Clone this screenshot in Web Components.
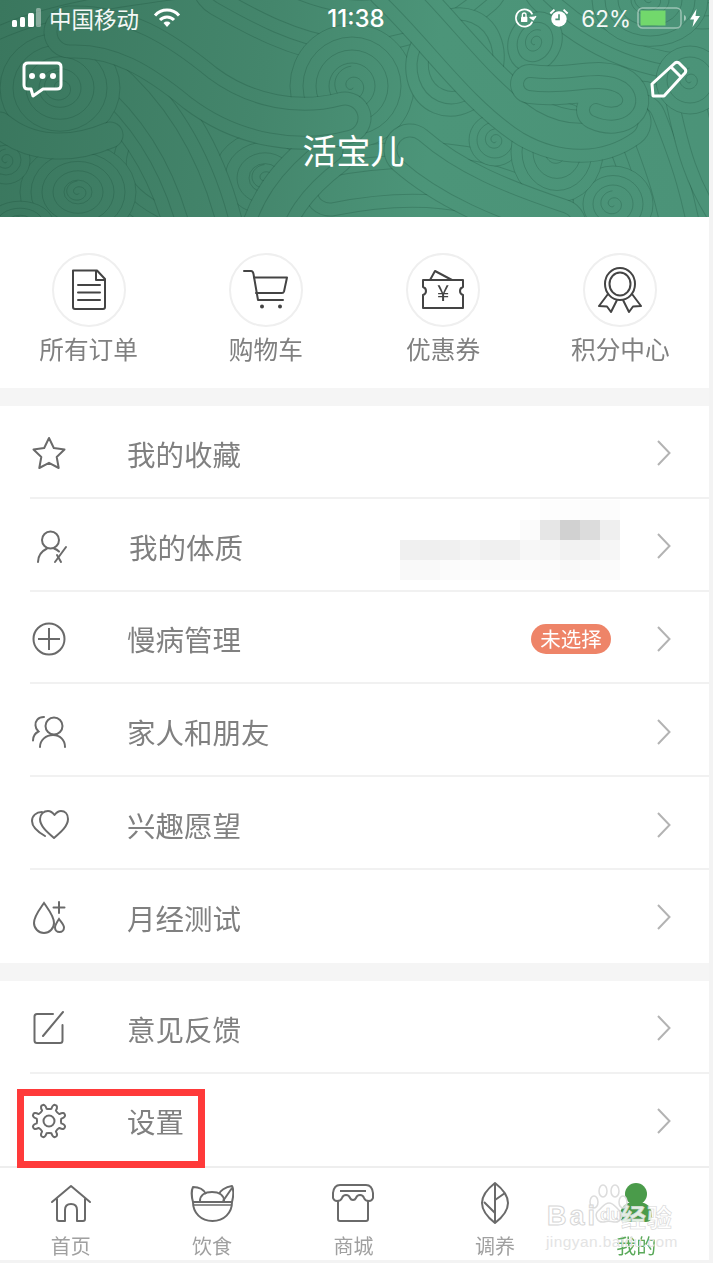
<!DOCTYPE html>
<html lang="zh">
<head>
<meta charset="utf-8">
<title>我的</title>
<style>
  html, body { margin: 0; padding: 0; background: #f3f3f3; }
  body { width: 713px; height: 1263px; overflow: hidden; font-family: "Noto Sans CJK SC", "Noto Sans", sans-serif; }
</style>
</head>
<body>
<app-page>
  <hero-header name="活宝儿"></hero-header>

  <quick-grid>
    <quick-action label="所有订单">
      <svg width="44" height="44" viewBox="0 0 44 44" fill="none" stroke="#444" stroke-width="2" stroke-linejoin="round" stroke-linecap="round">
        <path d="M6 2.500h24l8 8.500v28q0 2-2 2H8q-2 0-2-2z"/><path d="M29 3v9h9"/><path d="M11 17h22M11 24.500h22M11 32h22"/>
      </svg>
    </quick-action>
    <quick-action label="购物车">
      <svg width="50" height="44" viewBox="0 0 50 44" fill="none" stroke="#444" stroke-width="2" stroke-linejoin="round" stroke-linecap="round">
        <path d="M3 3h7q2 0 2.500 3L17 32h25"/><path d="M13 9.500h33l-3 14q-.5 1.500-2 1.500H15"/>
        <circle cx="21" cy="38.500" r="2" fill="#444" stroke="none"/><circle cx="39" cy="38.500" r="2" fill="#444" stroke="none"/>
      </svg>
    </quick-action>
    <quick-action label="优惠券">
      <svg width="46" height="44" viewBox="0 0 46 44" fill="none" stroke="#444" stroke-width="2" stroke-linejoin="round" stroke-linecap="round">
        <path d="M3 12h40v7q-3 1-3 4t3 4v13H3V27q3-1 3-4t-3-4z"/><path d="M10 12l5-9 17 9"/>
        <text x="23" y="33" text-anchor="middle" font-family="Noto Sans CJK SC" font-size="22" fill="#444" stroke="none">¥</text>
      </svg>
    </quick-action>
    <quick-action label="积分中心">
      <svg width="46" height="46" viewBox="0 0 46 46" fill="none" stroke="#444" stroke-width="2" stroke-linejoin="round">
        <ellipse cx="23" cy="17" rx="15" ry="16"/><ellipse cx="23" cy="17" rx="10.500" ry="11.500"/>
        <path d="M11 27L2 39l8 .5L14 45l6-12"/><path d="M35 27l9 12-8 .5L32 45l-6-12"/>
      </svg>
    </quick-action>
  </quick-grid>

  <menu-group>
    <menu-row>
      <svg slot="icon" width="40" height="40" viewBox="0 0 40 40" fill="none" stroke="#6a6a6a" stroke-width="2" stroke-linejoin="round"><path d="M20 5l4.800 10 10.700 1.500-7.800 7.500 2 11L20 29.800 10.300 35l2-11-7.800-7.500L15.200 15z"/></svg>
      我的收藏
    </menu-row>
    <menu-row style="--label-shift:2px">
      <svg slot="icon" width="40" height="40" viewBox="0 0 40 40" fill="none" stroke="#6a6a6a" stroke-width="2" stroke-linecap="round"><ellipse cx="21.500" cy="14" rx="8.500" ry="8.500"/><path d="M9 36c0-6 4-11 9-13.500"/><path d="M25 22.500q3 1 5 3"/><path d="M37 21L26 36"/><path d="M28 29l4 7"/></svg>
      我的体质
    </menu-row>
    <menu-row>
      <svg slot="icon" width="40" height="40" viewBox="0 0 40 40" fill="none" stroke="#6a6a6a" stroke-width="2"><circle cx="20" cy="20" r="15.500"/><path d="M20 9v22M9 20h22"/></svg>
      慢病管理
      <status-pill slot="meta">未选择</status-pill>
    </menu-row>
    <menu-row>
      <svg slot="icon" width="40" height="40" viewBox="0 0 40 40" fill="none" stroke="#6a6a6a" stroke-width="2" stroke-linecap="round"><circle cx="25" cy="14" r="8.500"/><path d="M11 35c0-7 6-12 13-12s12 5 12 12"/><path d="M15 5c-6 0-9 4-8.500 8.500 0 2.500 1.500 4.500 3 6-3 1.500-5.500 5-5.500 9"/></svg>
      家人和朋友
    </menu-row>
    <menu-row>
      <svg slot="icon" width="40" height="40" viewBox="0 0 40 40" fill="none" stroke="#6a6a6a" stroke-width="2" stroke-linecap="round" stroke-linejoin="round"><path d="M25 33C18 27 11 21 11 14C11 9 15 6 19 6C22 6 24 8 25.500 10C27 8 29 6 32 6C36 6 39 9 39 14C39 21 32 27 25 33z"/><path d="M13 7C7 7 3 11 3 16C3 22 9 27 16 31"/></svg>
      兴趣愿望
    </menu-row>
    <menu-row last>
      <svg slot="icon" width="40" height="40" viewBox="0 0 40 40" fill="none" stroke="#6a6a6a" stroke-width="2" stroke-linecap="round"><path d="M15 6c-4 6-10 13-10 20a10 10 0 0 0 20 0C25 19 19 12 15 6z"/><path d="M30 22c-2 3-4 6-4 8.500a4.500 4.500 0 0 0 9 0C35 28 32 25 30 22z"/><path d="M30 5v11M24.500 10.500h11"/></svg>
      月经测试
    </menu-row>
  </menu-group>

  <menu-group>
    <menu-row>
      <svg slot="icon" width="40" height="40" viewBox="0 0 40 40" fill="none" stroke="#6a6a6a" stroke-width="2" stroke-linecap="round"><path d="M24 6H8q-2.500 0-2.500 2.500v24q0 2.500 2.500 2.500h23q2.500 0 2.500-2.500V17"/><path d="M34 4L14 28"/></svg>
      意见反馈
    </menu-row>
    <menu-row last>
      <gear-icon slot="icon"></gear-icon>
      设置
    </menu-row>
  </menu-group>

  <tab-bar>
    <tab-item label="首页">
      <svg width="44" height="44" viewBox="0 0 44 44" fill="none" stroke="#6a6a6a" stroke-width="2" stroke-linecap="round" stroke-linejoin="round"><path d="M3 21L22 5l19 16"/><path d="M8 18v20q0 2 2 2h6V29q0-6 6-6t6 6v11h6q2 0 2-2V18"/></svg>
    </tab-item>
    <tab-item label="饮食">
      <svg width="44" height="44" viewBox="0 0 44 44" fill="none" stroke="#6a6a6a" stroke-width="2" stroke-linejoin="round"><path d="M3 21h39c0 11-8 19-19.500 19S3 32 3 21z"/><path d="M3 24h39" stroke-width="1.500"/><path d="M3 21C1 14 2 8 3 6C9 6 14 9 16 13"/><path d="M42 21C44 13 43 7 42 5C35 6 30 10 29 13"/><path d="M42 7L33 20"/><path d="M10 20C10 14 15 11 22 11S34 14 34 20"/></svg>
    </tab-item>
    <tab-item label="商城">
      <svg width="44" height="44" viewBox="0 0 44 44" fill="none" stroke="#6a6a6a" stroke-width="2" stroke-linejoin="round"><path d="M9 4h26q6 0 7 8v5q-1 3-4 3-4 0-5-3-1-3-4-3t-4 3q-1 2-3 2t-3-2q-1-3-4-3t-4 3q-1 3-5 3-3 0-4-3v-5q1-8 7-8z"/><path d="M7 20v18q0 2 2 2h26q2 0 2-2V20"/><path d="M9 10h26"/></svg>
    </tab-item>
    <tab-item label="调养">
      <svg width="44" height="44" viewBox="0 0 44 44" fill="none" stroke="#6a6a6a" stroke-width="2" stroke-linejoin="round"><path d="M22 2C13 9 9 15 9 22s4 13 13 20c9-7 13-13 13-20S31 9 22 2z"/><path d="M22 2v40"/><path d="M22 19l10-7M22 32l-11-11"/></svg>
    </tab-item>
    <tab-item label="我的" active>
      <svg width="44" height="44" viewBox="0 0 44 44" fill="#4a9b4a"><circle cx="22" cy="13" r="11"/><path d="M14 22h16c6 2 8 8 8 13 0 3-2 6-6 6H12c-4 0-6-3-6-6 0-5 2-11 8-13z"/></svg>
    </tab-item>
  </tab-bar>

  <blur-smudge></blur-smudge>
  <baidu-mark></baidu-mark>
  <focus-box></focus-box>
</app-page>

<script>
// petit helper : chaque composant déclare son style + son markup
function define(tag, html, extra) {
  const tpl = document.createElement("template");
  tpl.innerHTML = html;
  class El extends HTMLElement {
    connectedCallback() {
      if (this.shadowRoot) return;
      const root = this.attachShadow({ mode: "open" });
      root.appendChild(tpl.content.cloneNode(true));
      if (extra) extra(root, this);
    }
  }
  customElements.define(tag, El);
}

define("app-page", `
<style>
  :host { display: block; position: relative; width: 709px; height: 1260px; background: #fff; }
</style>
<slot></slot>`);

// volutes : bandes emboîtées (traits superposés, le plus large en dessous)
// chaque couche recouvre la précédente, d'où l'effet de rubans qui passent les uns sur les autres
function paintSwirls(svg) {
  const NS = "http://www.w3.org/2000/svg";
  const BG = "url(#heroBg)";
  const LINE = { stroke: "#174a36", "stroke-opacity": ".26" };
  const add = (name, attrs) => {
    const n = document.createElementNS(NS, name);
    Object.keys(attrs).forEach(k => n.setAttribute(k, attrs[k]));
    svg.appendChild(n);
  };
  const tube = (d, w, step = 13) => {
    for (let k = w; k > 0; k -= step * 2) {
      add("path", { d, fill: "none", ...LINE, "stroke-width": k + 1, "stroke-linecap": "round", "stroke-linejoin": "round" });
      add("path", { d, fill: "none", stroke: BG, "stroke-width": k - 1, "stroke-linecap": "round", "stroke-linejoin": "round" });
    }
  };
  const spiralD = (cx, cy, r1, turns, a0, k = 1, rot = 0) => {
    let d = "";
    const end = turns * Math.PI * 2, c = Math.cos(rot), s = Math.sin(rot);
    for (let t = 0; t <= end; t += .12) {
      const r = 2 + (r1 - 2) * t / end;
      const x = r * Math.cos(a0 + t), y = r * k * Math.sin(a0 + t);
      d += (d ? "L" : "M") + (cx + x * c - y * s).toFixed(1) + " " + (cy + x * s + y * c).toFixed(1);
    }
    return d;
  };
  // disque : anneaux concentriques et petite spirale au centre
  const disc = (cx, cy, r, step, k = 1, rot = 0, inner = 14) => {
    for (let q = r; q > inner; q -= step) {
      add("ellipse", { cx, cy, rx: q, ry: q * k, transform: `rotate(${rot * 57.3} ${cx} ${cy})`, fill: BG, ...LINE, "stroke-width": 1 });
    }
    add("path", { d: spiralD(cx, cy, inner, 1.600, 1, k, rot), fill: "none", ...LINE, "stroke-width": 1 });
  };

  // fond : rubans du dessous
  tube("M-20 20C40 -10 120 -20 200 -30", 52);
  tube("M230 -20C300 20 380 60 470 -20", 78);
  tube("M100 120C60 190 120 240 200 260", 78);
  tube("M330 190C430 170 520 180 610 260", 78);
  tube("M640 120C660 170 670 200 680 260", 78);
  tube("M560 -20C600 20 660 50 730 40", 78);
  tube("M690 90C700 140 710 180 740 220", 52);

  // petites volutes
  disc(78, 192, 58, 11, .85, 0, 13);
  disc(6, 160, 24, 9, 1, 0, 11);
  disc(20, 225, 34, 10, .7, 0, 12);
  disc(265, 178, 52, 12, .9, 0, 15);
  disc(495, 140, 26, 8, 1, 0, 11);
  disc(535, 42, 26, 9, 1.200, .5, 11);
  disc(613, 204, 40, 10, .95, 0, 14);
  disc(650, 0, 58, 13, .8, 0, 18);

  // grande descente à gauche
  tube("M108 70C150 105 190 160 208 245", 78);
  tube("M330 150C290 180 270 210 262 250", 52);

  // disques principaux
  disc(352, 86, 62, 13, 1, 0, 20);
  disc(455, 62, 48, 11, 1.150, .4, 15);
  disc(557, 152, 46, 11, 1.100, 0, 14);
  disc(60, 88, 60, 13, .92, 0, 18);

  // rubans qui traversent
  tube("M70 32C120 30 160 55 200 88C245 122 300 130 345 118", 52);
  tube("M392 -15C440 30 480 90 530 122C565 142 600 140 625 122", 52);
  tube("M410 150C450 185 500 205 560 225", 52);
  tube("M530 84C570 90 600 74 622 88C640 102 622 122 596 110", 39);
  tube("M0 125C30 150 70 152 110 135", 26);
  disc(690, 80, 34, 11, 1, 0, 12);
}

define("hero-header", `
<style>
  :host { display: block; position: relative; height: 217px; overflow: hidden; color: #fff; background: #44866c; }
  svg.bg { position: absolute; inset: 0; filter: blur(.4px); }
  .content { position: relative; display: flex; flex-direction: column; height: 100%; }
  .name { margin-top: 28px; text-align: center; font-size: 34px; line-height: 44px; padding-right: 2px; }
  .actions { display: flex; justify-content: space-between; align-items: flex-start; margin-top: 24px; padding: 0 21px; height: 40px; }
</style>
<svg class="bg" width="709" height="217">
  <defs>
    <linearGradient id="heroBg" gradientUnits="userSpaceOnUse" x1="0" y1="0" x2="709" y2="80">
      <stop offset="0" stop-color="#3a775e"/><stop offset=".38" stop-color="#44866c"/><stop offset=".62" stop-color="#4c9579"/><stop offset="1" stop-color="#4b9378"/>
    </linearGradient>
  </defs>
  <rect width="709" height="217" fill="url(#heroBg)"/>
</svg>
<div class="content">
  <status-bar></status-bar>
  <div class="actions">
    <svg width="42" height="38" viewBox="0 0 42 38" fill="none" stroke="#fff" stroke-width="3" stroke-linejoin="round">
      <path d="M7 3h29q4 0 4 4v18q0 4-4 4H22l-10 7-2-7H7q-4 0-4-4V7q0-4 4-4z"/>
      <g fill="#fff" stroke="none"><circle cx="11" cy="16" r="3"/><circle cx="21.500" cy="16" r="3"/><circle cx="32" cy="16" r="3"/></g>
    </svg>
    <svg width="38" height="38" viewBox="0 0 38 38" fill="none" stroke="#fff" stroke-width="3" stroke-linejoin="round">
      <path d="M2 24L25 3q2-1.500 4 0l6 6q1.500 2 0 4L14 36H3z"/><path d="M21 7l10 10"/>
    </svg>
  </div>
  <div class="name"></div>
</div>`, (root, el) => {
  root.querySelector(".name").textContent = el.getAttribute("name");
  paintSwirls(root.querySelector("svg.bg"));
});

define("status-bar", `
<style>
  :host { display: block; height: 36px; font-family: "Noto Sans CJK SC", sans-serif; color: #f4f8f6; }
  .bar { display: grid; grid-template-columns: 1fr auto 1fr; align-items: center; height: 36px; }
  .left, .right { display: flex; align-items: center; }
  .left { padding-left: 11px; gap: 6px; font-size: 22.500px; }
  .time { font-family: Inter, "Noto Sans", sans-serif; font-size: 24px; font-weight: 500; color: #fff; margin-left: 3px; }
  .right { justify-content: flex-end; padding-right: 8px; }
  .pct { font-family: Inter, "Noto Sans", sans-serif; font-size: 22.500px; margin: 0 6px 0 12px; }
  .carrier { line-height: 36px; }
  svg { display: block; }
</style>
<div class="bar">
  <div class="left">
    <svg width="32" height="20" viewBox="0 0 32 20" fill="#fff">
      <rect x="1" y="12" width="5" height="7" rx="1.500"/><rect x="9" y="9" width="5" height="10" rx="1.500"/><rect x="17" y="5" width="6" height="14" rx="1.500"/><rect x="25" y="0" width="5" height="19" rx="1.500" fill-opacity=".4"/>
    </svg>
    <span class="carrier">中国移动</span>
    <svg width="28" height="20" viewBox="0 0 28 20" style="margin-left:8px">
      <g fill="none" stroke="#fff" stroke-width="3"><path d="M2 7.500a16 16 0 0 1 24 0"/><path d="M7 12a9.500 9.500 0 0 1 14 0"/></g>
      <path d="M10.500 15a5 5 0 0 1 7 0L14 19z" fill="#fff"/>
    </svg>
  </div>
  <div class="time">11:38</div>
  <div class="right">
    <svg width="22" height="20" viewBox="0 0 24 22" fill="none" stroke="#fff" stroke-width="1.800">
      <path d="M19 15a9.500 9.500 0 1 1 0-8"/><path d="M16 10l4 3 3-4" stroke-width="1.500" fill="#fff"/>
      <rect x="6.500" y="9.500" width="7" height="6" rx="1" fill="#fff" stroke="none"/><path d="M8 10V7.500a2 2 0 0 1 4 0V10" stroke-width="1.500"/>
    </svg>
    <svg width="20" height="20" viewBox="0 0 22 22" style="margin-left:12px">
      <circle cx="11" cy="12" r="8.500" fill="#fff"/><path d="M11 7v5.500H7" fill="none" stroke="#4a9175" stroke-width="1.800"/>
      <path d="M1.500 6L6 1.800M20.500 6L16 1.800" stroke="#fff" stroke-width="2.200"/>
    </svg>
    <span class="pct">62%</span>
    <svg width="50" height="22" viewBox="0 0 50 22">
      <rect x="1" y="1" width="43" height="20" rx="4.500" fill="none" stroke="#fff" stroke-opacity=".45" stroke-width="1.500"/>
      <rect x="3.500" y="3.500" width="25" height="15" fill="#72d86c"/>
      <path d="M47 8q2 .5 2 3t-2 3z" fill="#fff" fill-opacity=".5"/>
    </svg>
    <svg width="12" height="20" viewBox="0 0 12 20" fill="#fff" style="margin-left:2px"><path d="M7.500 1L1 11.500h4L3.500 19 11 8H6.500z"/></svg>
  </div>
</div>`);

define("quick-grid", `
<style>
  :host { display: grid; grid-template-columns: repeat(4, 1fr); height: 171px; padding-top: 36px; box-sizing: border-box; filter: blur(.35px); }
</style>
<slot></slot>`);

define("quick-action", `
<style>
  :host { display: flex; flex-direction: column; align-items: center; }
  .ring { box-sizing: border-box; width: 74px; height: 74px; border: 2px solid #efefef; border-radius: 50%; display: flex; align-items: center; justify-content: center; }
  .label { margin-top: 3px; font-size: 24.700px; line-height: 36px; color: #808080; white-space: nowrap; }
  ::slotted(svg) { display: block; }
</style>
<div class="ring"><slot></slot></div>
<div class="label"></div>`, (root, el) => {
  root.querySelector(".label").textContent = el.getAttribute("label");
});

define("menu-group", `
<style>
  :host { display: block; border-top: 18px solid #f5f5f5; }
</style>
<slot></slot>`);

define("menu-row", `
<style>
  :host { display: block; height: 92.800px; padding-left: 30px; box-sizing: border-box; filter: blur(.35px); }
  .inner { display: flex; align-items: center; height: 100%; box-sizing: border-box; padding-top: 4px; border-bottom: 2px solid #f1f1f1; }
  :host([last]) .inner { border-bottom-color: transparent; }
  .icon { width: 98px; margin-left: -1px; flex: none; display: flex; }
  .text { flex: 1; font-size: 28.500px; color: #808080; white-space: nowrap; margin-left: var(--label-shift, 0); }
  .chev { margin: 0 38px 0 46px; flex: none; display: block; }
  ::slotted(svg) { display: block; }
</style>
<div class="inner">
  <div class="icon"><slot name="icon"></slot></div>
  <div class="text"><slot></slot></div>
  <slot name="meta"></slot>
  <svg class="chev" width="14" height="26" viewBox="0 0 14 26" fill="none" stroke="#b3b3b3" stroke-width="2"><path d="M1 1l11.500 12L1 25"/></svg>
</div>`);

// roue dentée à 8 lobes arrondis
define("gear-icon", `
<style>
  :host { display: block; width: 40px; height: 40px; }
  svg { display: block; }
</style>
<svg width="40" height="40" viewBox="0 0 40 40" fill="none" stroke="#6a6a6a" stroke-width="2" stroke-linejoin="round"><circle cx="20" cy="20" r="5.500"/><path class="cog"/></svg>`, (root) => {
  let d = "";
  const pt = (r, a) => (20 + r * Math.cos(a)).toFixed(1) + " " + (20 + r * Math.sin(a)).toFixed(1);
  for (let i = 0; i < 8; i++) {
    const a = i * Math.PI / 4 - Math.PI / 8, w = Math.PI / 8;
    d += (i ? "L" : "M") + pt(12.5, a - w * .5);
    d += "C" + pt(16.5, a - w * .45) + " " + pt(17.5, a - w * .2) + " " + pt(17, a);
    d += "C" + pt(17.5, a + w * .2) + " " + pt(16.5, a + w * .45) + " " + pt(12.5, a + w * .5);
    d += "Q" + pt(11.5, a + w) + " " + pt(12.5, a + w * 1.5);
  }
  root.querySelector(".cog").setAttribute("d", d + "Z");
});

define("status-pill", `
<style>
  :host { display: block; box-sizing: border-box; width: 80px; height: 30px; border-radius: 15px; background: #ee8468; color: #fff; font-size: 20.500px; line-height: 29px; text-align: center; white-space: nowrap; }
</style>
<slot></slot>`);

define("tab-bar", `
<style>
  :host { display: grid; grid-template-columns: repeat(5, 1fr); height: 93.400px; box-sizing: border-box; border-top: 2px solid #eee; background: #fff; padding-right: 2px; filter: blur(.35px); }
</style>
<slot></slot>`);

define("tab-item", `
<style>
  :host { display: flex; flex-direction: column; align-items: center; padding-top: 13px; color: #a0a0a0; }
  :host([active]) { color: #5aa95a; }
  .label { font-size: 20px; line-height: 26px; margin-top: 8px; white-space: nowrap; }
  ::slotted(svg) { display: block; }
</style>
<slot></slot>
<div class="label"></div>`, (root, el) => {
  root.querySelector(".label").textContent = el.getAttribute("label");
});

// zone floutée du screenshot d'origine (mosaïque)
define("blur-smudge", `
<style>
  :host { position: absolute; left: 400px; top: 500px; width: 220px; height: 80px; display: grid; grid-template-columns: repeat(11, 20px); grid-auto-rows: 20px; }
  i { display: block; }
</style>`, (root) => {
  const cells = [
    "fff fff fff fff fff fff fff fdfdfd fdfdfd fcfcfc fcfcfc",
    "fff fff fff fff fff fff fbfbfb e6e6e6 d1d1d1 dcdcdc efefef",
    "f0f0f0 efefef f0f0f0 f3f3f3 f0f0f0 f0f0f0 f7f7f7 f6f6f6 f2f2f2 f2f2f2 f6f6f6",
    "f9f9f9 f9f9f9 fbfbfb fcfcfc fbfbfb fcfcfc fcfcfc fbfbfb f9f9f9 fafafa fbfbfb",
  ];
  cells.join(" ").split(" ").forEach(c => {
    const i = document.createElement("i");
    i.style.background = "#" + c;
    root.appendChild(i);
  });
});

// filigrane Baidu par-dessus la barre d'onglets
define("baidu-mark", `
<style>
  :host { position: absolute; left: 546px; top: 1184px; width: 130px; height: 68px; font-family: "Liberation Sans", sans-serif; pointer-events: none; }
  svg { position: absolute; left: 42px; top: 0; }
  .brand { position: absolute; left: 1px; top: 17px; font-size: 27px; line-height: 30px; font-weight: 700; color: rgba(255,255,255,.7); -webkit-text-stroke: 1px #d6d6d6; letter-spacing: 3px; white-space: nowrap; }
  .du { position: absolute; left: 54px; top: 21px; font-size: 17px; line-height: 20px; font-weight: 700; color: #fff; -webkit-text-stroke: .6px #cfcfcf; white-space: nowrap; }
  .jy { position: absolute; left: 75px; top: 18px; font-family: "Noto Sans CJK SC", sans-serif; font-size: 25px; line-height: 28px; font-weight: 700; color: rgba(255,255,255,.85); -webkit-text-stroke: .6px #d6d6d6; white-space: nowrap; letter-spacing: 1px; }
  .url { position: absolute; left: 0; top: 49px; font-size: 15.500px; line-height: 18px; color: #e4e4e4; white-space: nowrap; letter-spacing: .4px; }
</style>
<svg width="44" height="46" viewBox="0 0 44 46" fill="rgba(255,255,255,.6)" stroke="#dcdcdc" stroke-width="1.500">
  <ellipse cx="6" cy="18" rx="4" ry="6"/><ellipse cx="15" cy="7" rx="4" ry="6"/><ellipse cx="27" cy="7" rx="4" ry="6"/><ellipse cx="35" cy="18" rx="4" ry="6"/>
  <path d="M21 19c5 0 7 5 11 8 4 4 1 12-6 11-4-1-7-1-10 0-7 1-10-7-6-11 4-3 6-8 11-8z"/>
</svg>
<span class="brand">Bai</span><span class="du">du</span><span class="jy">经验</span><span class="url">jingyan.baidu.com</span>`);

// cadre rouge d'annotation
define("focus-box", `
<style>
  :host { position: absolute; left: 17px; top: 1089px; width: 188px; height: 79px; box-sizing: border-box; border: 7px solid #ff3a3a; pointer-events: none; }
</style>`);
</script>
</body>
</html>
